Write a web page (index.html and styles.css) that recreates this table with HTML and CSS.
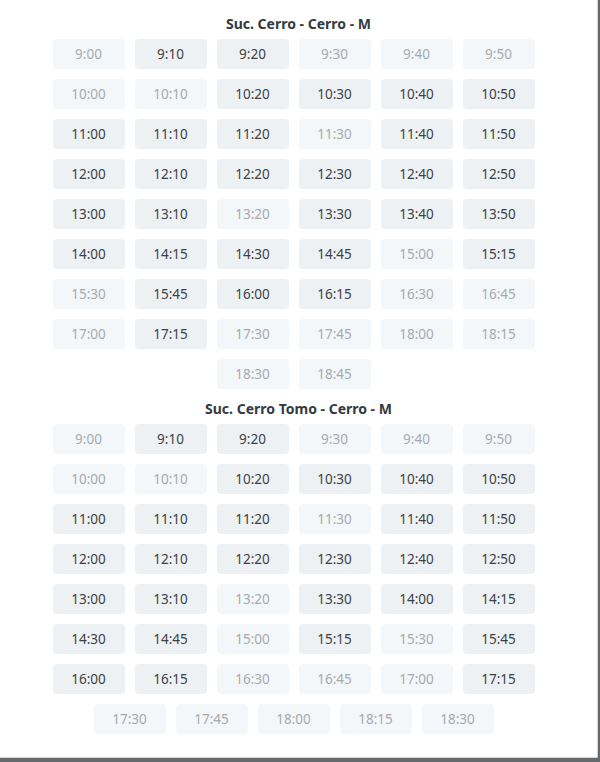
FILE: index.html
```html
<!DOCTYPE html>
<html lang="es">
<head>
<meta charset="utf-8">
<title>Horarios</title>
<link rel="stylesheet" href="styles.css">
</head>
<body>
<div class="panel">
  <section class="group">
    <h3 class="title">Suc. Cerro - Cerro - M</h3>
    <div class="slots">
      <span class="slot off">9:00</span><span class="slot">9:10</span><span class="slot">9:20</span><span class="slot off">9:30</span><span class="slot off">9:40</span><span class="slot off">9:50</span>
      <span class="slot off">10:00</span><span class="slot off">10:10</span><span class="slot">10:20</span><span class="slot">10:30</span><span class="slot">10:40</span><span class="slot">10:50</span>
      <span class="slot">11:00</span><span class="slot">11:10</span><span class="slot">11:20</span><span class="slot off">11:30</span><span class="slot">11:40</span><span class="slot">11:50</span>
      <span class="slot">12:00</span><span class="slot">12:10</span><span class="slot">12:20</span><span class="slot">12:30</span><span class="slot">12:40</span><span class="slot">12:50</span>
      <span class="slot">13:00</span><span class="slot">13:10</span><span class="slot off">13:20</span><span class="slot">13:30</span><span class="slot">13:40</span><span class="slot">13:50</span>
      <span class="slot">14:00</span><span class="slot">14:15</span><span class="slot">14:30</span><span class="slot">14:45</span><span class="slot off">15:00</span><span class="slot">15:15</span>
      <span class="slot off">15:30</span><span class="slot">15:45</span><span class="slot">16:00</span><span class="slot">16:15</span><span class="slot off">16:30</span><span class="slot off">16:45</span>
      <span class="slot off">17:00</span><span class="slot">17:15</span><span class="slot off">17:30</span><span class="slot off">17:45</span><span class="slot off">18:00</span><span class="slot off">18:15</span>
      <span class="slot off">18:30</span><span class="slot off">18:45</span>
    </div>
  </section>
  <section class="group">
    <h3 class="title">Suc. Cerro Tomo - Cerro - M</h3>
    <div class="slots">
      <span class="slot off">9:00</span><span class="slot">9:10</span><span class="slot">9:20</span><span class="slot off">9:30</span><span class="slot off">9:40</span><span class="slot off">9:50</span>
      <span class="slot off">10:00</span><span class="slot off">10:10</span><span class="slot">10:20</span><span class="slot">10:30</span><span class="slot">10:40</span><span class="slot">10:50</span>
      <span class="slot">11:00</span><span class="slot">11:10</span><span class="slot">11:20</span><span class="slot off">11:30</span><span class="slot">11:40</span><span class="slot">11:50</span>
      <span class="slot">12:00</span><span class="slot">12:10</span><span class="slot">12:20</span><span class="slot">12:30</span><span class="slot">12:40</span><span class="slot">12:50</span>
      <span class="slot">13:00</span><span class="slot">13:10</span><span class="slot off">13:20</span><span class="slot">13:30</span><span class="slot">14:00</span><span class="slot">14:15</span>
      <span class="slot">14:30</span><span class="slot">14:45</span><span class="slot off">15:00</span><span class="slot">15:15</span><span class="slot off">15:30</span><span class="slot">15:45</span>
      <span class="slot">16:00</span><span class="slot">16:15</span><span class="slot off">16:30</span><span class="slot off">16:45</span><span class="slot off">17:00</span><span class="slot">17:15</span>
      <span class="slot off">17:30</span><span class="slot off">17:45</span><span class="slot off">18:00</span><span class="slot off">18:15</span><span class="slot off">18:30</span>
    </div>
  </section>
</div>
</body>
</html>
```

FILE: styles.css
```css
html, body {
  margin: 0;
  padding: 0;
  background: #656969;
  height: 762px;
  overflow: hidden;
}

.panel {
  box-sizing: border-box;
  width: 598px;
  height: 758px;
  background: #ffffff;
  border-right: 1px solid #d6d8d8;
  border-bottom: 1px solid #d6d8d8;
  border-bottom-right-radius: 2px;
  padding-top: 14px;
  font-family: "Noto Sans", "Open Sans", sans-serif;
}

.title {
  margin: 0 0 5px;
  font-size: 14px;
  line-height: 20px;
  font-weight: 700;
  color: #343a40;
  text-align: center;
}

.slots {
  width: 500px;
  margin: 0 auto;
  display: flex;
  flex-wrap: wrap;
  justify-content: center;
}

.slot {
  box-sizing: border-box;
  width: 72px;
  height: 30px;
  margin: 0 10px 10px 0;
  border-radius: 4px;
  background: #eef1f4;
  color: #3c4147;
  font-size: 13.5px;
  line-height: 30px;
  text-align: center;
}

.slot.off {
  background: #f4f7fa;
  color: #a6aaaf;
}
```
